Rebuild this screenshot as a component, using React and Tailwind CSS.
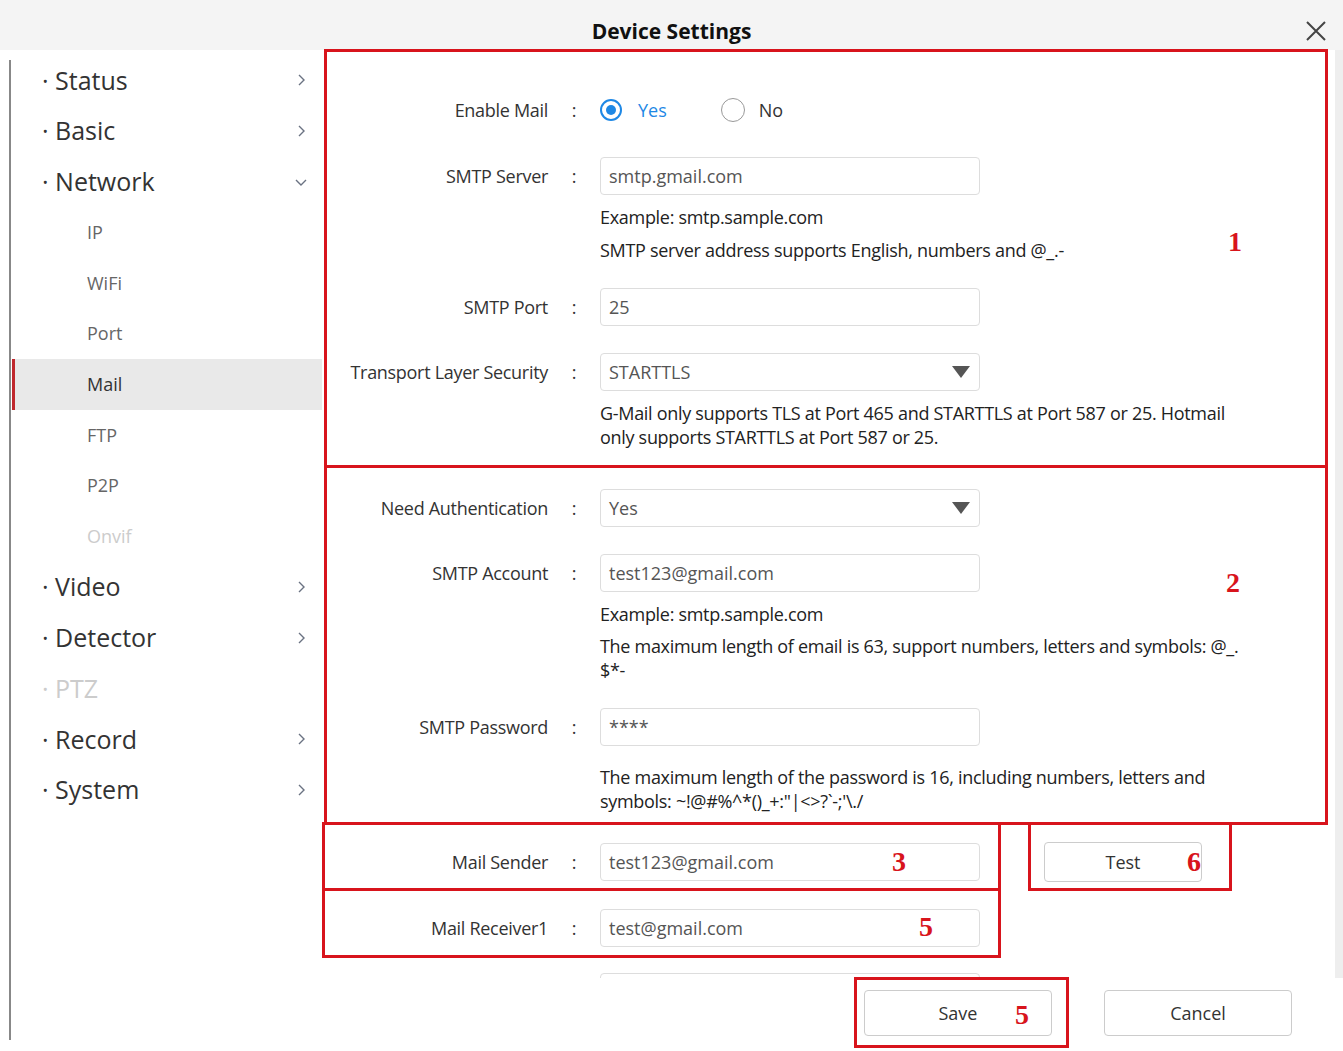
import React from "react";

const F = { fontFamily: '"Open Sans","Noto Sans",sans-serif' };
const SERIF = { fontFamily: '"Liberation Serif",serif' };

const nav = [
  ["· Status", "main", ">"],
  ["· Basic", "main", ">"],
  ["· Network", "main", "v"],
  ["IP", "sub"],
  ["WiFi", "sub"],
  ["Port", "sub"],
  ["Mail", "active"],
  ["FTP", "sub"],
  ["P2P", "sub"],
  ["Onvif", "dim"],
  ["· Video", "main", ">"],
  ["· Detector", "main", ">"],
  ["· PTZ", "maindim"],
  ["· Record", "main", ">"],
  ["· System", "main", ">"],
];

const Chevron = ({ down }) => (
  <svg width="14" height="14" viewBox="0 0 14 14" className="text-gray-500">
    {down ? (
      <path d="M2 5l5 5 5-5" fill="none" stroke="currentColor" strokeWidth="1.4" />
    ) : (
      <path d="M5 2l5 5-5 5" fill="none" stroke="currentColor" strokeWidth="1.4" />
    )}
  </svg>
);

const Label = ({ children }) => (
  <div className="flex items-center w-[278px] shrink-0">
    <span className="flex-1 text-right text-[18px] text-[#333] tracking-[-0.3px]">{children}</span>
    <span className="w-[52px] text-center text-[18px] text-[#333]">:</span>
  </div>
);

const Input = ({ value, select }) => (
  <div className="w-[380px] h-[38px] border border-[#ddd] rounded-sm flex items-center px-2 text-[18px] text-[#555] bg-white">
    <span className="flex-1">{value}</span>
    {select && (
      <svg width="20" height="14" viewBox="0 0 20 14"><path d="M1 1h18L10 13z" fill="#555" /></svg>
    )}
  </div>
);

const Row = ({ label, top, children }) => (
  <div className="flex items-center" style={{ marginTop: top }}>
    <Label>{label}</Label>
    {children}
  </div>
);

const Note = ({ children, top = 0 }) => (
  <div className="pl-[278px] text-[18px] leading-[24px] text-[#222] tracking-[-0.3px] whitespace-nowrap" style={{ marginTop: top }}>
    {children}
  </div>
);

const Box = ({ cls }) => <div className={`absolute border-[3px] border-[#d8141c] ${cls}`} />;
const Num = ({ n, cls }) => (
  <div className={`absolute text-[28px] font-bold text-[#d8141c] leading-none ${cls}`} style={SERIF}>{n}</div>
);

export default function App() {
  return (
    <div className="relative w-[1343px] h-[1051px] bg-white overflow-hidden" style={F}>
      <div className="absolute left-[8px] top-[8px] right-0 h-px bg-[#ddd]" />
      <div className="absolute left-[9px] top-[60px] w-[2px] h-[980px] bg-[#888]" />
      <div className="h-[50px] bg-[#f4f4f4] flex justify-center relative pt-[16px]">
        <span className="text-[21px] leading-[30px] font-bold text-[#111]">Device Settings</span>
        <svg className="absolute right-[16px] top-[20px]" width="22" height="22" viewBox="0 0 22 22">
          <path d="M2 2l18 18M20 2L2 20" stroke="#444" strokeWidth="2" />
        </svg>
      </div>
      <div className="flex">
        <div className="w-[322px] shrink-0 pt-[5px] pl-[12px]">
          {nav.map(([t, k, ic]) => (
            <div
              key={t}
              className={`h-[50.7px] flex items-center pr-[14px] ${k === "active" ? "bg-[#e9e9e9] border-l-[3px] border-[#c0282d]" : ""}`}
            >
              <span
                className={
                  k === "main"
                    ? "pl-[30px] text-[25px] text-[#333] flex-1"
                    : k === "maindim"
                    ? "pl-[30px] text-[25px] text-[#ccc] flex-1"
                    : k === "dim"
                    ? "pl-[75px] text-[18px] text-[#ccc] flex-1"
                    : k === "active"
                    ? "pl-[72px] text-[18px] text-[#333] flex-1"
                    : "pl-[75px] text-[18px] text-[#666] flex-1"
                }
              >
                {t}
              </span>
              {ic && <Chevron down={ic === "v"} />}
            </div>
          ))}
        </div>
        <div className="flex-1 h-[928px] overflow-hidden">
          <Row label="Enable Mail" top={40}>
            <div className="flex items-center h-[40px] text-[18px]">
              <span className="w-[22px] h-[22px] rounded-full border-2 border-[#1e88e5] flex items-center justify-center">
                <span className="w-[10px] h-[10px] rounded-full bg-[#1e88e5]" />
              </span>
              <span className="ml-[16px] text-[#1e88e5]">Yes</span>
              <span className="ml-[54px] w-[24px] h-[24px] rounded-full border border-[#999]" />
              <span className="ml-[14px] text-[#333]">No</span>
            </div>
          </Row>
          <Row label="SMTP Server" top={27}><Input value="smtp.gmail.com" /></Row>
          <Note top={10}>Example: smtp.sample.com</Note>
          <Note top={9}>SMTP server address supports English, numbers and @_.-</Note>
          <Row label="SMTP Port" top={26}><Input value="25" /></Row>
          <Row label="Transport Layer Security" top={27}><Input value="STARTTLS" select /></Row>
          <Note top={10}>G-Mail only supports TLS at Port 465 and STARTTLS at Port 587 or 25. Hotmail<br />only supports STARTTLS at Port 587 or 25.</Note>
          <Row label="Need Authentication" top={40}><Input value="Yes" select /></Row>
          <Row label="SMTP Account" top={27}><Input value="test123@gmail.com" /></Row>
          <Note top={10}>Example: smtp.sample.com</Note>
          <Note top={8}>The maximum length of email is 63, support numbers, letters and symbols: @_.<br />$*-</Note>
          <Row label="SMTP Password" top={26}><Input value="****" /></Row>
          <Note top={19}>The maximum length of the password is 16, including numbers, letters and<br />symbols: ~!@#%^*()_+{}:"|&lt;&gt;?`-;'\./</Note>
          <Row label="Mail Sender" top={29}>
            <Input value="test123@gmail.com" />
            <div className="ml-[64px] w-[158px] h-[40px] border border-[#ccc] rounded flex items-center justify-center text-[18px] text-[#333]">Test</div>
          </Row>
          <Row label="Mail Receiver1" top={27}><Input value="test@gmail.com" /></Row>
          <Row label="Mail Receiver2" top={26}><Input value="" /></Row>
        </div>
        <div className="w-[8px] bg-[#eee]" />
      </div>
      <div className="absolute left-[322px] right-[8px] top-[978px] bottom-0 bg-white flex justify-end items-start gap-[52px] pr-[43px] pt-[12px]">
        <div className="w-[188px] h-[46px] border border-[#ccc] rounded flex items-center justify-center text-[18px] text-[#333]">Save</div>
        <div className="w-[188px] h-[46px] border border-[#ccc] rounded flex items-center justify-center text-[18px] text-[#333]">Cancel</div>
      </div>

      <Box cls="left-[324px] top-[49px] w-[1004px] h-[419px]" />
      <Box cls="left-[324px] top-[465px] w-[1004px] h-[360px]" />
      <Box cls="left-[322px] top-[822px] w-[679px] h-[69px]" />
      <Box cls="left-[322px] top-[888px] w-[679px] h-[70px]" />
      <Box cls="left-[1028px] top-[822px] w-[204px] h-[69px]" />
      <Box cls="left-[854px] top-[977px] w-[215px] h-[71px]" />
      <Num n="1" cls="left-[1228px] top-[228px]" />
      <Num n="2" cls="left-[1226px] top-[569px]" />
      <Num n="3" cls="left-[892px] top-[848px]" />
      <Num n="5" cls="left-[919px] top-[913px]" />
      <Num n="6" cls="left-[1187px] top-[848px]" />
      <Num n="5" cls="left-[1015px] top-[1001px]" />
    </div>
  );
}
